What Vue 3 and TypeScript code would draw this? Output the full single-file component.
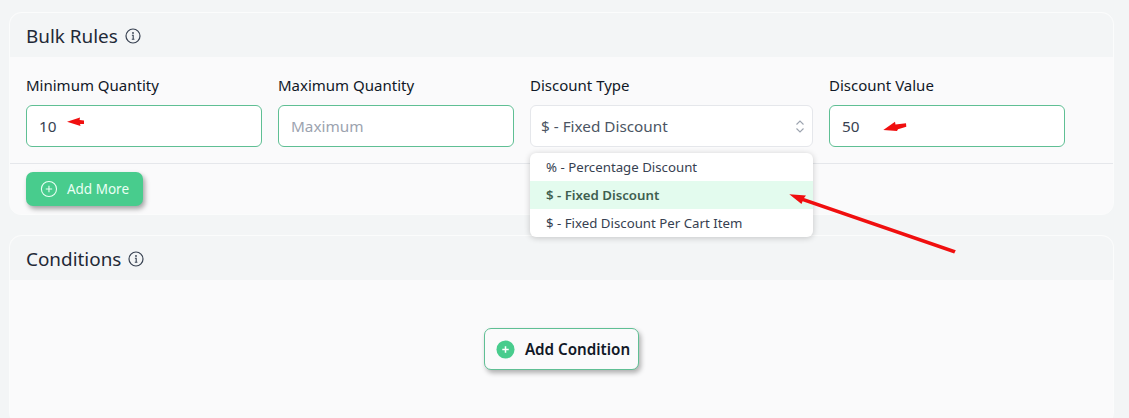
<script setup lang="ts">
const options = [
  { label: '% - Percentage Discount', active: false },
  { label: '$ - Fixed Discount', active: true },
  { label: '$ - Fixed Discount Per Cart Item', active: false },
]
</script>

<template>
  <div class="page">
    <section class="card bulk">
      <header class="card-head">
        <h2>Bulk Rules</h2>
        <svg class="info" viewBox="0 0 16 16" fill="none">
          <circle cx="8" cy="8" r="7" stroke="currentColor" stroke-width="1.2" />
          <path d="M6.9 7.2H8.2V11.2M6.8 11.3H9.4" stroke="currentColor" stroke-width="1.1" />
          <circle cx="8" cy="5" r="0.9" fill="currentColor" />
        </svg>
      </header>
      <div class="fields">
        <div class="field">
          <label>Minimum Quantity</label>
          <div class="input">10</div>
        </div>
        <div class="field">
          <label>Maximum Quantity</label>
          <div class="input placeholder">Maximum</div>
        </div>
        <div class="field wide">
          <label>Discount Type</label>
          <div class="input select">
            <span>$ - Fixed Discount</span>
            <svg class="updown" viewBox="0 0 8 13" fill="none">
              <path d="M.5 4.5L4 1L7.5 4.5M.5 8.5L4 12L7.5 8.5" stroke="currentColor" stroke-width="1.1" />
            </svg>
          </div>
          <ul class="menu">
            <li v-for="o in options" :key="o.label" :class="{ active: o.active }">{{ o.label }}</li>
          </ul>
        </div>
        <div class="field">
          <label>Discount Value</label>
          <div class="input">50</div>
        </div>
      </div>
      <div class="foot">
        <button class="add-more" type="button">
          <svg viewBox="0 0 18 18" fill="none">
            <circle cx="9" cy="9" r="7.6" stroke="currentColor" stroke-width="1.1" />
            <path d="M9 5.8V12.2M5.8 9H12.2" stroke="currentColor" stroke-width="1.1" />
          </svg>
          Add More
        </button>
      </div>
    </section>

    <section class="card conditions">
      <header class="card-head">
        <h2>Conditions</h2>
        <svg class="info" viewBox="0 0 16 16" fill="none">
          <circle cx="8" cy="8" r="7" stroke="currentColor" stroke-width="1.2" />
          <path d="M6.9 7.2H8.2V11.2M6.8 11.3H9.4" stroke="currentColor" stroke-width="1.1" />
          <circle cx="8" cy="5" r="0.9" fill="currentColor" />
        </svg>
      </header>
      <div class="empty">
        <button class="add-condition" type="button">
          <svg viewBox="0 0 20 20">
            <circle cx="10" cy="10" r="9.5" fill="#48cc8d" />
            <path d="M10 6.6V13.4M6.6 10H13.4" stroke="#fff" stroke-width="1.6" />
          </svg>
          Add Condition
        </button>
      </div>
    </section>

    <svg class="arrows" viewBox="0 0 1129 418" fill="#f00f0f">
      <path d="M67 121.7L80 117.5L79.6 120L84 120.5L84 124L80 124L80.5 126Z" />
      <path d="M883.3 130L895 121.7L895.5 124.6L906 123.3L906.3 126.7L898 129.3L897 131Z" />
      <path d="M789.3 194.3L806 195.6L804 198L955.8 250.2L954.2 253.4L802.6 201.2L801.5 204Z" />
    </svg>
  </div>
</template>

<style scoped>
.page {
  position: relative;
  box-sizing: border-box;
  width: 1129px;
  height: 418px;
  overflow: hidden;
  padding: 12px 15px 0 9px;
  background: #f3f5f6;
  font-family: "Noto Sans", "Open Sans", sans-serif;
  color: #111827;
}
.card {
  border: 1px solid #fbfcfc;
  border-radius: 12px;
  background: #fafafb;
  overflow: visible;
}
.bulk {
  height: 203px;
  box-sizing: border-box;
}
.conditions {
  margin-top: 20px;
  height: 190px;
  box-sizing: border-box;
}
.card-head {
  display: flex;
  align-items: center;
  gap: 7px;
  box-sizing: border-box;
  height: 44px;
  padding: 2px 16px 0;
  border-radius: 12px 12px 0 0;
  background: #f3f5f6;
  color: #1f2937;
}
.card-head h2 {
  margin: 0;
  font-size: 18.9px;
  font-weight: 400;
  line-height: 24px;
}
.info {
  width: 16px;
  height: 16px;
  color: #374151;
}
.fields {
  display: flex;
  gap: 16px;
  box-sizing: border-box;
  height: 107px;
  padding: 18px 16px 0;
  border-bottom: 1px solid #e5e7eb;
}
.field {
  position: relative;
  width: 236px;
  flex: none;
}
.field.wide {
  width: 283px;
}
label {
  display: block;
  height: 20px;
  margin-bottom: 10px;
  font-size: 15px;
  line-height: 20px;
  color: #111827;
}
.input {
  display: flex;
  align-items: center;
  box-sizing: border-box;
  height: 42px;
  padding: 0 12px;
  border: 1px solid #5fbf94;
  border-radius: 6px;
  background: #fff;
  font-size: 15.3px;
  color: #374151;
}
.placeholder {
  color: #9ca3af;
}
.select {
  justify-content: space-between;
  padding: 0 8px 0 10px;
  border-color: #e5e7eb;
  color: #4b5563;
}
.updown {
  width: 8px;
  height: 13px;
  color: #9ca3af;
}
.menu {
  position: absolute;
  z-index: 2;
  top: 78px;
  left: 0;
  right: 0;
  margin: 0;
  padding: 0;
  list-style: none;
  background: #fff;
  border-radius: 6px;
  box-shadow: 0 1px 6px rgba(0, 0, 0, 0.2);
  overflow: hidden;
}
.menu li {
  box-sizing: border-box;
  height: 28px;
  padding: 0 16px;
  font-size: 13.25px;
  line-height: 28px;
  color: #374151;
}
.menu li.active {
  background: #e3fbee;
  font-weight: 600;
  color: #3f5f50;
}
.foot {
  padding: 8px 16px 0;
}
button {
  display: flex;
  align-items: center;
  font-family: inherit;
  cursor: pointer;
}
.add-more {
  gap: 9px;
  box-sizing: border-box;
  width: 117px;
  height: 34px;
  padding: 0 14px;
  border: 0;
  border-radius: 7px;
  background: #48cc8d;
  box-shadow: 2px 3px 5px rgba(0, 0, 0, 0.35);
  font-size: 13.5px;
  color: #eafff4;
  white-space: nowrap;
}
.add-more svg {
  width: 18px;
  height: 18px;
}
.empty {
  display: flex;
  justify-content: center;
  padding-top: 48px;
}
.add-condition {
  gap: 10px;
  box-sizing: border-box;
  height: 42px;
  padding: 0 8px 0 11px;
  border: 1px solid #5fbf94;
  border-radius: 7px;
  background: #fafafb;
  box-shadow: 2px 3px 5px rgba(0, 0, 0, 0.3);
  font-size: 15.2px;
  font-weight: 600;
  color: #111827;
}
.add-condition svg {
  width: 19px;
  height: 19px;
}
.arrows {
  position: absolute;
  z-index: 3;
  inset: 0;
  width: 1129px;
  height: 418px;
  pointer-events: none;
}
</style>
